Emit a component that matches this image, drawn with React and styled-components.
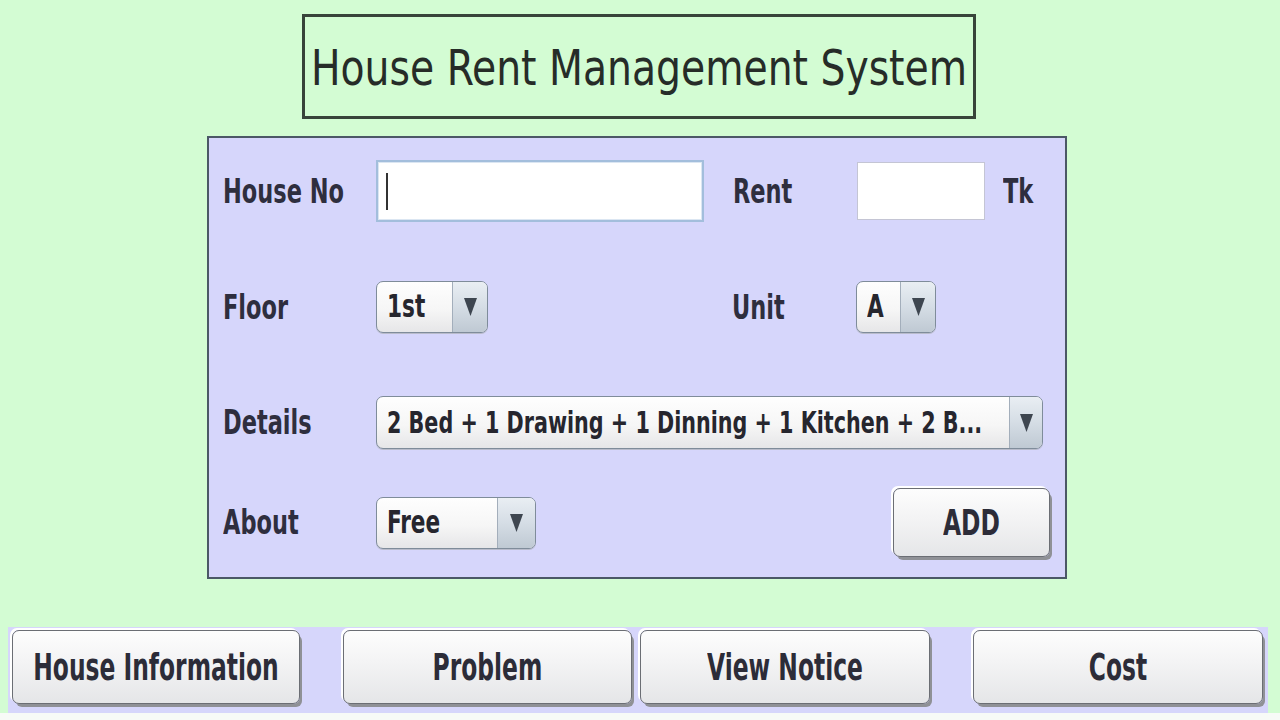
import React from 'react';
import styled, { createGlobalStyle } from 'styled-components';

const GlobalStyle = createGlobalStyle`
  html, body {
    margin: 0;
    padding: 0;
    background: #d3fcd3;
  }
  body {
    font-family: "DejaVu Sans Condensed", "DejaVu Sans", sans-serif;
  }
`;

const Page = styled.div`
  width: 1280px;
  height: 720px;
  display: flex;
  flex-direction: column;
  align-items: flex-start;
  background: #d3fcd3;
  overflow: hidden;
`;

const Stretch = styled.span`
  display: inline-block;
  transform: scaleY(${(p) => p.$sy || 1.36});
  transform-origin: center;
  white-space: nowrap;
`;

const TitleBox = styled.div`
  box-sizing: border-box;
  margin: 14px 0 0 302px;
  width: 674px;
  height: 105px;
  border: 3px solid #38443a;
  display: flex;
  align-items: center;
  justify-content: center;
  font-size: 43.7px;
  color: #262c28;
  padding-top: 2px;
`;

const Panel = styled.div`
  box-sizing: border-box;
  margin: 17px 0 0 207px;
  width: 860px;
  height: 443px;
  border: 2px solid #4b5866;
  background: #d6d6fb;
  padding: 0 15px 0 14px;
  display: flex;
  flex-direction: column;
`;

const Row = styled.div`
  display: flex;
  align-items: center;
  flex: none;
  margin-top: ${(p) => p.$top}px;
  height: ${(p) => p.$h}px;
`;

const Label = styled.div`
  flex: none;
  width: ${(p) => p.$w || 153}px;
  font-weight: bold;
  font-size: 25px;
  color: #2e2e3e;
`;

const Gap = styled.div`
  flex: none;
  width: ${(p) => p.$w}px;
`;

const Fill = styled.div`
  flex: 1;
`;

const TextField = styled.div`
  position: relative;
  box-sizing: border-box;
  flex: none;
  width: ${(p) => p.$w}px;
  height: ${(p) => p.$h}px;
  background: #fff;
  border: ${(p) => (p.$focus ? '2px solid #a3bedc' : '1px solid #c4c5d4')};
  box-shadow: ${(p) => (p.$focus ? 'inset 0 0 0 1px #dbe6f2' : 'none')};
  ${(p) =>
    p.$focus &&
    `&::after {
      content: '';
      position: absolute;
      left: 8px;
      top: 11px;
      width: 2px;
      height: 37px;
      background: #333;
    }`}
`;

const Combo = styled.div`
  box-sizing: border-box;
  flex: none;
  display: flex;
  width: ${(p) => p.$w}px;
  height: ${(p) => p.$h || 52}px;
  border: 1.5px solid #7f8c9a;
  border-radius: 7px;
  overflow: hidden;
  background: linear-gradient(#fefefe 0%, #f6f6f6 55%, #e6e6e8 100%);
  box-shadow: 0 1px 0 #b9bccb;
`;

const ComboValue = styled.div`
  flex: 1;
  display: flex;
  align-items: center;
  padding-left: 10px;
  font-weight: bold;
  font-size: ${(p) => p.$fs || 24}px;
  color: #26262e;
  overflow: hidden;
`;

const ComboArrow = styled.div`
  flex: none;
  width: ${(p) => p.$w || 34}px;
  display: flex;
  align-items: center;
  justify-content: center;
  border-left: 1px solid #a3aebb;
  background: linear-gradient(#e9eef3 0%, #d5dde5 50%, #bfc9d3 100%);
`;

const Arrow = () => (
  <svg width="13" height="20" viewBox="0 0 13 20">
    <polygon points="0,1 13,1 6.5,19" fill="#3e4650" />
  </svg>
);

const Button = styled.div`
  box-sizing: border-box;
  flex: none;
  display: flex;
  align-items: center;
  justify-content: center;
  width: ${(p) => p.$w}px;
  height: ${(p) => p.$h}px;
  margin-left: ${(p) => p.$ml || 0}px;
  border: 1.5px solid #6b6e74;
  border-radius: 7px;
  background: linear-gradient(#fdfdfd 0%, #f3f3f4 45%, #e5e6e8 100%);
  box-shadow: -2px -2px 0 #ffffff, 3px 4px 0 -1px #8f9196;
  font-weight: bold;
  font-size: 26px;
  color: #2c2c38;
`;

const BottomBar = styled.div`
  box-sizing: border-box;
  margin: 48px 0 0 8px;
  width: 1260px;
  height: 86px;
  background: #d6d6fb;
  display: flex;
  align-items: flex-start;
  padding: 3px 0 0 4px;
`;

const BottomStrip = styled.div`
  flex: 1;
  align-self: stretch;
  background: #f7faf7;
`;

const ComboBox = ({ w, h, value, fs, aw }) => (
  <Combo $w={w} $h={h}>
    <ComboValue $fs={fs}>
      <Stretch $sy={1.3}>{value}</Stretch>
    </ComboValue>
    <ComboArrow $w={aw}>
      <Arrow />
    </ComboArrow>
  </Combo>
);

const App = () => {
  return (
    <Page>
      <GlobalStyle />
      <TitleBox>
        <Stretch $sy={1.13}>House Rent Management System</Stretch>
      </TitleBox>

      <Panel>
        <Row $top={22} $h={62}>
          <Label>
            <Stretch>House No</Stretch>
          </Label>
          <TextField $w={328} $h={62} $focus />
          <Gap $w={29} />
          <Label $w={124}>
            <Stretch>Rent</Stretch>
          </Label>
          <TextField $w={128} $h={58} />
          <Gap $w={18} />
          <Label $w={40}>
            <Stretch>Tk</Stretch>
          </Label>
        </Row>

        <Row $top={59} $h={52}>
          <Label>
            <Stretch>Floor</Stretch>
          </Label>
          <ComboBox w={112} value="1st" />
          <Gap $w={244} />
          <Label $w={124}>
            <Stretch>Unit</Stretch>
          </Label>
          <ComboBox w={80} value="A" />
        </Row>

        <Row $top={63} $h={53}>
          <Label>
            <Stretch>Details</Stretch>
          </Label>
          <ComboBox
            w={667}
            h={53}
            fs={23}
            aw={32}
            value="2 Bed + 1 Drawing + 1 Dinning + 1 Kitchen + 2 B..."
          />
        </Row>

        <Row $top={38} $h={71}>
          <Label>
            <Stretch>About</Stretch>
          </Label>
          <ComboBox w={160} value="Free" aw={37} />
          <Fill />
          <Button $w={157} $h={69}>
            <Stretch $sy={1.36}>ADD</Stretch>
          </Button>
        </Row>
      </Panel>

      <BottomBar>
        <Button $w={288} $h={74}>
          <Stretch $sy={1.4}>House Information</Stretch>
        </Button>
        <Button $w={289} $h={74} $ml={43}>
          <Stretch $sy={1.4}>Problem</Stretch>
        </Button>
        <Button $w={290} $h={74} $ml={8}>
          <Stretch $sy={1.4}>View Notice</Stretch>
        </Button>
        <Button $w={290} $h={74} $ml={43}>
          <Stretch $sy={1.4}>Cost</Stretch>
        </Button>
      </BottomBar>
      <BottomStrip />
    </Page>
  );
};

export default App;
